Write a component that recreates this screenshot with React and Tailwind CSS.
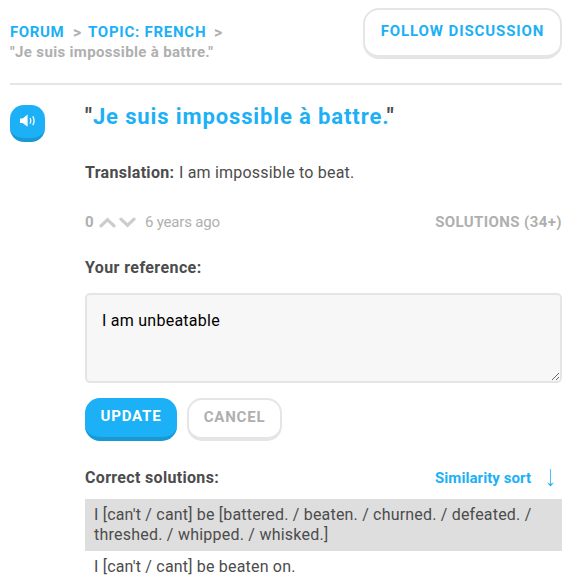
function Speaker() {
  return (
    <svg width="17" height="14" viewBox="0 0 17 14" fill="none">
      <path d="M1 4.6h2.6L8.6 0.6v12.2L3.6 9H1z" fill="#fff" />
      <path d="M11 4q1.6 2.9 0 5.6M13.8 2.4q2.6 4.4 0 8.8" stroke="#fff" strokeWidth="1.3" />
    </svg>
  );
}

function Chevron({ down }) {
  return (
    <svg width="17" height="11" viewBox="0 0 17 11" fill="none">
      <path
        d={down ? "M2 2.2l6.5 6.2L15 2.2" : "M2 8.8l6.5-6.2L15 8.8"}
        stroke="#ccc"
        strokeWidth="3.2"
        strokeLinecap="round"
      />
    </svg>
  );
}

export default function App() {
  return (
    <div className="h-[580px] w-[570px] overflow-hidden bg-white pl-[10px] pr-2 font-[Roboto,sans-serif] text-base leading-5 text-[#4c4c4c]">
      <header className="flex h-[85px] justify-between border-b-2 border-[#e5e5e5]">
        <nav className="pt-[22px] font-bold text-[#afafaf]">
          <div className="flex h-5 whitespace-nowrap text-[15px]">
            <a className="w-[63px] tracking-[0.6px] text-[#1cb0f6]">FORUM</a>
            <span className="w-[15px] text-base leading-[21px]">&gt;</span>
            <a className="w-[126px] tracking-[0.75px] text-[#1cb0f6]">TOPIC: FRENCH</a>
            <span className="text-base leading-[21px]">&gt;</span>
          </div>
          <div className="whitespace-nowrap text-[15px] tracking-[0.34px]">"Je suis impossible à battre."</div>
        </nav>
        <button className="mt-2 flex h-[51px] w-[199px] justify-center whitespace-nowrap rounded-[16px] border-2 border-b-4 border-[#e5e5e5] pt-[11px] text-[15px] font-bold tracking-[0.9px] text-[#1cb0f6]">
          FOLLOW DISCUSSION
        </button>
      </header>

      <main className="flex">
        <div className="w-[75px] shrink-0 pt-5">
          <button className="flex h-[37px] w-[35px] justify-center rounded-[14px] border-b-4 border-[#1899d6] bg-[#1cb0f6] pt-[9px]">
            <Speaker />
          </button>
        </div>
        <div className="w-[477px] whitespace-nowrap">
          <h1 className="mt-[17px] text-[22px] font-bold leading-[30px] tracking-[0.88px]">
            "<span className="text-[#1cb0f6]">Je suis impossible à battre.</span>"
          </h1>
          <p className="mt-[31px] flex">
            <b className="w-[94px] tracking-[0.3px]">Translation:</b>
            <span className="tracking-[0.2px]">I am impossible to beat.</span>
          </p>
          <div className="mt-[29px] flex h-5 items-center text-[#afafaf]">
            <b className="w-[14px] text-[15px]">0</b>
            <span className="flex w-[46px] gap-[3px]">
              <Chevron />
              <Chevron down />
            </span>
            <span className="text-[15px] tracking-[-0.2px]">6 years ago</span>
            <b className="ml-auto text-[15px] tracking-[0.4px]">SOLUTIONS (34+)</b>
          </div>
          <h2 className="mt-[26px] font-bold tracking-[0.4px]">Your reference:</h2>
          <textarea
            className="mt-[15px] block h-[90px] w-full rounded-[5px] border-2 border-[#e5e5e5] bg-[#f7f7f7] px-[15px] py-4 tracking-[0.25px] text-black outline-none"
            defaultValue="I am unbeatable"
          />
          <div className="mt-[15px] flex gap-[10px] text-[15px] font-bold tracking-[0.8px]">
            <button className="flex h-[43px] w-[92px] justify-center rounded-[15px] border-b-4 border-[#1899d6] bg-[#1cb0f6] pt-[8px] text-white">
              UPDATE
            </button>
            <button className="flex h-[43px] w-[95px] justify-center rounded-[15px] border-2 border-b-4 border-[#e5e5e5] pt-[7px] text-[#afafaf]">
              CANCEL
            </button>
          </div>
          <div className="mt-[27px] flex h-5 items-center font-bold">
            <h2 className="tracking-[0.32px]">Correct solutions:</h2>
            <a className="ml-auto w-[111px] text-[15px] tracking-[0.07px] text-[#1cb0f6]">Similarity sort</a>
            <svg className="mr-[7px]" width="9" height="18" viewBox="0 0 9 18" fill="none">
              <path d="M4.5 0v16" stroke="#1cb0f6" strokeOpacity="0.8" />
              <path d="M1 13.5l3.5 4L8 13.5l-3.5 1.5z" fill="#1cb0f6" />
            </svg>
          </div>
          <ul className="mt-[11px] tracking-[0.19px]">
            <li className="h-[52px] bg-[#dedede] pl-[9px] pt-1.5">
              I [can't / cant] be [battered. / beaten. / churned. / defeated. /<br />
              <span className="tracking-[0.23px]">threshed. / whipped. / whisked.]</span>
            </li>
            <li className="pl-[9px] pt-1.5">I [can't / cant] be beaten on.</li>
          </ul>
        </div>
      </main>
    </div>
  );
}
